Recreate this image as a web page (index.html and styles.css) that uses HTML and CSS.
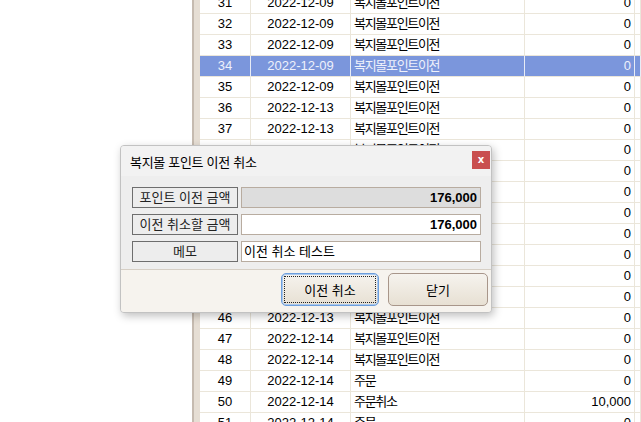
FILE: index.html
```html
<!DOCTYPE html>
<html lang="ko">
<head>
    <meta charset="UTF-8">
    <title>복지몰 포인트 이전 취소</title>
    <link rel="stylesheet" href="styles.css">
</head>
<body>
    <div class="screen">
        <div class="blank"></div>
        <div class="splitter"></div>
        <div class="grid" id="grid"></div>
    </div>

    <div class="dialog">
        <div class="dialog-title">
            <span>복지몰 포인트 이전 취소</span>
            <button class="close-btn">x</button>
        </div>
        <div class="dialog-body">
            <div class="field">
                <div class="label">포인트 이전 금액</div>
                <div class="input disabled num">176,000</div>
            </div>
            <div class="field">
                <div class="label">이전 취소할 금액</div>
                <div class="input num">176,000</div>
            </div>
            <div class="field">
                <div class="label">메모</div>
                <div class="input">이전 취소 테스트</div>
            </div>
        </div>
        <div class="dialog-foot">
            <button class="btn focused"><span>이전 취소</span></button>
            <button class="btn"><span>닫기</span></button>
        </div>
    </div>

    <script>
        const rows = [
            [31, '2022-12-09', '복지몰포인트이전', '0'],
            [32, '2022-12-09', '복지몰포인트이전', '0'],
            [33, '2022-12-09', '복지몰포인트이전', '0'],
            [34, '2022-12-09', '복지몰포인트이전', '0'],
            [35, '2022-12-09', '복지몰포인트이전', '0'],
            [36, '2022-12-13', '복지몰포인트이전', '0'],
            [37, '2022-12-13', '복지몰포인트이전', '0'],
            [38, '2022-12-13', '복지몰포인트이전', '0'],
            [39, '2022-12-13', '복지몰포인트이전', '0'],
            [40, '2022-12-13', '복지몰포인트이전', '0'],
            [41, '2022-12-13', '복지몰포인트이전', '0'],
            [42, '2022-12-13', '복지몰포인트이전', '0'],
            [43, '2022-12-13', '복지몰포인트이전', '0'],
            [44, '2022-12-13', '복지몰포인트이전', '0'],
            [45, '2022-12-13', '복지몰포인트이전', '0'],
            [46, '2022-12-13', '복지몰포인트이전', '0'],
            [47, '2022-12-14', '복지몰포인트이전', '0'],
            [48, '2022-12-14', '복지몰포인트이전', '0'],
            [49, '2022-12-14', '주문', '0'],
            [50, '2022-12-14', '주문취소', '10,000'],
            [51, '2022-12-14', '주문', '0']
        ];
        const grid = document.getElementById('grid');
        rows.forEach(r => {
            const row = document.createElement('div');
            row.className = 'row' + (r[0] === 34 ? ' selected' : '');
            row.innerHTML =
                '<div class="cell c-no">' + r[0] + '</div>' +
                '<div class="cell c-date">' + r[1] + '</div>' +
                '<div class="cell c-type">' + r[2] + '</div>' +
                '<div class="cell c-amt">' + r[3] + '</div>' +
                '<div class="cell c-more"></div>';
            grid.appendChild(row);
        });
    </script>
</body>
</html>
```

FILE: styles.css
```css
:root {
    --grid-line: #ebe6da;
    --sel-bg: #7b96dc;
    --frame: #b8aca0;
}

body {
    margin: 0;
    width: 641px;
    height: 422px;
    overflow: hidden;
    position: relative;
    background: #fff;
    font-family: 'Liberation Sans', 'Noto Sans CJK KR', sans-serif;
    font-size: 13px;
    color: #000;
}

.screen {
    display: flex;
    height: 100%;
}
.blank {
    width: 192px;
    flex-shrink: 0;
}
.splitter {
    width: 6px;
    flex-shrink: 0;
    background: #e6ded4;
    border-left: 2px solid #c6bbb0;
}
.grid {
    flex: 1;
    margin-top: -7px;
}
.row {
    display: grid;
    grid-template-columns: 51px 100px 174px 110px 1fr;
    height: 21px;
}
.cell {
    box-sizing: border-box;
    border-right: 1px solid var(--grid-line);
    border-bottom: 1px solid var(--grid-line);
    line-height: 20px;
    white-space: nowrap;
    overflow: hidden;
}
.c-no, .c-date {
    text-align: center;
}
.c-type {
    padding-left: 3px;
    letter-spacing: -1.3px;
}
.c-amt {
    text-align: right;
    padding-right: 3px;
}
.row.selected .cell {
    background: var(--sel-bg);
    color: #eef1fb;
    border-right-color: #e8ecf6;
}

.dialog {
    position: absolute;
    left: 120px;
    top: 145px;
    width: 370px;
    height: 166px;
    border: 1px solid #c2c2c2;
    border-radius: 4px;
    background: #eeeeee;
    box-shadow: 2px 3px 8px rgba(0, 0, 0, 0.25);
    display: flex;
    flex-direction: column;
    overflow: hidden;
}
.dialog-title {
    height: 30px;
    display: flex;
    align-items: center;
    justify-content: space-between;
    padding-left: 9px;
    background: #f2f2f2;
    letter-spacing: -0.3px;
}
.close-btn {
    width: 18px;
    height: 18px;
    margin-right: 1px;
    margin-bottom: 2px;
    padding: 0;
    border: none;
    background: #c94f4f;
    color: #fff;
    font-family: 'DejaVu Sans', sans-serif;
    font-weight: bold;
    font-size: 10px;
    line-height: 16px;
}
.dialog-body {
    flex: 1;
    display: flex;
    flex-direction: column;
    gap: 6px;
    padding: 11px 10px 0 11px;
}
.field {
    display: flex;
    gap: 3px;
    height: 21px;
}
.label {
    width: 106px;
    box-sizing: border-box;
    border: 1px solid #6e6e6e;
    background: #ededed;
    text-align: center;
    line-height: 19px;
    color: #222;
}
.input {
    flex: 1;
    box-sizing: border-box;
    border: 1px solid var(--frame);
    background: #fff;
    line-height: 19px;
    padding: 0 3px 0 2px;
}
.input.disabled {
    background: #dddddd;
}
.input.num {
    text-align: right;
    font-weight: bold;
}
.dialog-foot {
    height: 43px;
    box-sizing: border-box;
    border-top: 1px solid #d6cfc5;
    background: #f6f3ee;
    display: flex;
    justify-content: flex-end;
    align-items: flex-start;
    gap: 9px;
    padding: 3px 3px 0 0;
}
.btn {
    width: 100px;
    height: 33px;
    padding: 2px;
    border: 1px solid #a8968a;
    border-radius: 5px;
    background: linear-gradient(#f6f3ee, #e7e0d3);
    font-family: inherit;
    font-size: 13px;
    color: #000;
}
.btn span {
    display: flex;
    align-items: center;
    justify-content: center;
    height: 100%;
    box-sizing: border-box;
}
.btn.focused {
    width: 98px;
    border-color: #6e9fdc;
    box-shadow: inset 0 0 0 1px #a9c8ee;
}
.btn.focused span {
    border: 1px dotted #222;
}
```
